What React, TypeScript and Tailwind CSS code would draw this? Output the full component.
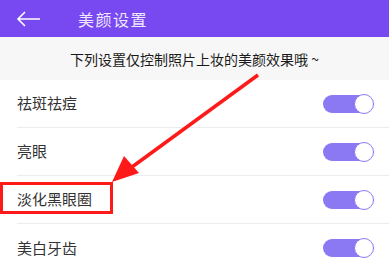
import React from "react";

const rows = ["祛斑祛痘", "亮眼", "淡化黑眼圈", "美白牙齿"];

function Toggle() {
  return (
    <div className="relative h-[18px] w-[50px] rounded-full bg-[#8b79f4]">
      <div className="absolute right-[-1px] top-[-1px] h-[20px] w-[20px] rounded-full border border-[#8b79f4] bg-white" />
    </div>
  );
}

export default function App() {
  return (
    <div
      className="relative h-[262px] w-[389px] overflow-hidden bg-white"
      style={{ fontFamily: '"Noto Sans CJK SC", "Noto Sans", sans-serif' }}
    >
      {/* Header */}
      <div className="flex h-[37px] items-center bg-[#7848f0] shadow-[0_1px_2px_rgba(0,0,0,0.15)]">
        <svg width="26" height="16" viewBox="0 0 26 16" className="ml-[16px]" fill="none">
          <path d="M24 8H2M9 1L2 8l7 7" stroke="#fff" strokeWidth="1.6" />
        </svg>
        <span className="ml-[36px] text-[16px] leading-none tracking-[1.5px] text-[#efe8ff]">美颜设置</span>
      </div>

      {/* Notice */}
      <div className="flex h-[43px] items-center justify-center bg-[#f7f7f7] pt-[1px] text-[14px] text-[#1a1a1a]">
        下列设置仅控制照片上妆的美颜效果哦 ~
      </div>

      {/* Rows */}
      <div className="pl-[17px]">
        {rows.map((r, i) => (
          <div
            key={r}
            className={`flex h-[48px] items-center justify-between pr-[16px] ${i < rows.length - 1 ? "border-b border-[#ececec]" : ""}`}
          >
            <span className="text-[15px] text-[#333]">{r}</span>
            <Toggle />
          </div>
        ))}
      </div>

      {/* Annotation box */}
      <div className="absolute left-0 top-[182px] h-[32px] w-[113px] border-[3px] border-[#ff1a1a]" />

      {/* Annotation arrow */}
      <svg className="absolute left-0 top-0" width="389" height="262" viewBox="0 0 389 262">
        <line x1="258" y1="75" x2="132" y2="167" stroke="#ff1a1a" strokeWidth="3.5" />
        <polygon points="112,182 124,156 139,173" fill="#ff1a1a" />
      </svg>
    </div>
  );
}
